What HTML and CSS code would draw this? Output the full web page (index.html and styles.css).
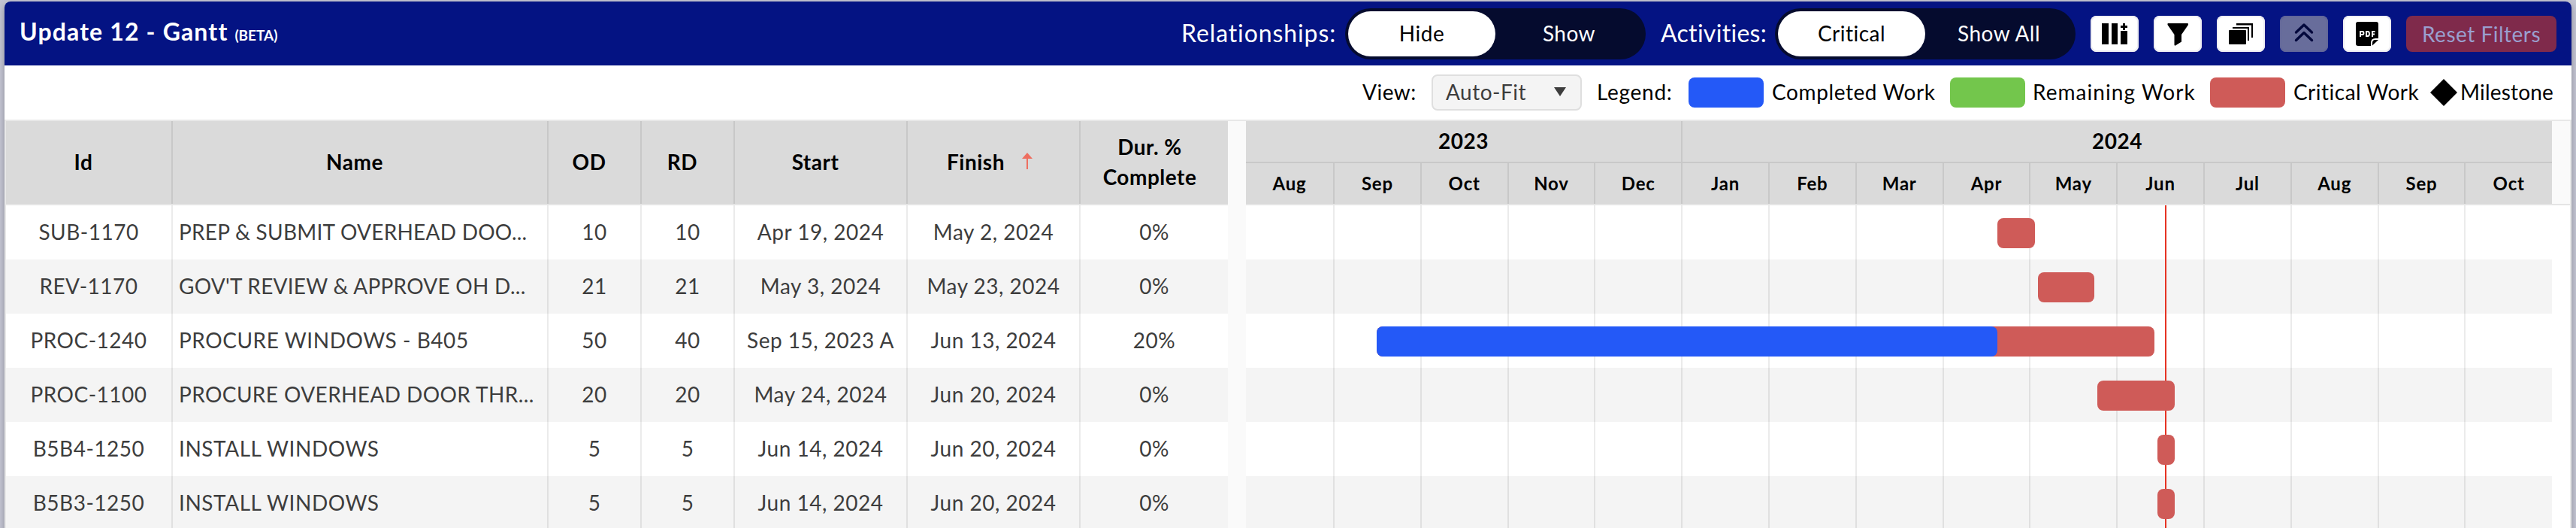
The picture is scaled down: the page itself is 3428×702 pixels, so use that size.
FILE: index.html
```html
<!DOCTYPE html>
<html lang="en">
<head>
<meta charset="utf-8">
<title>Update 12 - Gantt</title>
<link rel="stylesheet" href="styles.css">
</head>
<body>
<main class="card">
  <header class="topbar">
    <h1 class="title">Update 12 - Gantt <span class="beta">(BETA)</span></h1>
    <div class="controls">
      <span class="label label-rel">Relationships:</span>
      <div class="toggle"><span class="option active">Hide</span><span class="option">Show</span></div>
      <span class="label label-act">Activities:</span>
      <div class="toggle"><span class="option active">Critical</span><span class="option">Show All</span></div>
      <button class="icon-btn"><svg width="64" height="48" viewBox="0 0 64 48"><path d="M15 10h9v28h-9zM28 10h8v28h-8zM40 20h9v18h-9zM43 10h3v3h3v3h-3v3h-3v-3h-3v-3h3z"/></svg></button>
      <button class="icon-btn"><svg width="64" height="48" viewBox="0 0 64 48"><path d="M19 10h26q1 0 1 1v1l-9 13v9.500l-8 5q-1.500.5-1.500-1V25l-9-13v-1q0-1 .5-1z"/></svg></button>
      <button class="icon-btn"><svg width="64" height="48" viewBox="0 0 64 48"><rect x="16" y="19" width="23" height="19" rx="1"/><path d="M21 15h22v18h-2V17H21zM26 10h22v19h-2V12.500H26z"/></svg></button>
      <button class="icon-btn disabled"><svg width="64" height="48" viewBox="0 0 64 48"><path class="chev" d="M21.500 22 32 12l10.500 10M21.500 32.500 32 22.500l10.500 10"/></svg></button>
      <button class="icon-btn"><svg width="64" height="48" viewBox="0 0 64 48"><path d="M20 8h24q3 0 3 3v19h-4q-6 0-6 6v4H20q-3 0-3-3V11q0-3 3-3zM39 39.500V36q0-4 4-4h4z"/><path class="pdf" d="M23 28v-7h3q1.500 0 1.500 2t-1.500 2h-3M31 21v6h2q2 0 2-3t-2-3zM39 28v-7h3.500M39 24.500h3"/></svg></button>
      <button class="reset">Reset Filters</button>
    </div>
  </header>

  <section class="toolbar">
    <span class="text view">View:</span>
    <div class="select"><span>Auto-Fit</span><svg width="16" height="12" viewBox="0 0 16 12"><path d="M0 0h16L8 12z"/></svg></div>
    <span class="text legend">Legend:</span>
    <i class="swatch blue"></i><span class="text completed">Completed Work</span>
    <i class="swatch green"></i><span class="text remaining">Remaining Work</span>
    <i class="swatch red"></i><span class="text critical">Critical Work</span>
    <svg class="diamond" width="36" height="36" viewBox="0 0 36 36"><path d="M18 0 36 18 18 36 0 18z"/></svg><span class="text milestone">Milestone</span>
  </section>

  <section class="gantt">
    <div class="grid">
      <div class="cols head">
        <div>Id</div><div>Name</div><div>OD</div><div>RD</div><div>Start</div>
        <div class="sorted">Finish<svg width="14" height="22" viewBox="0 0 14 22"><path d="M7 0l7 8H8v14H6V8H0z"/></svg></div>
        <div class="dur">Dur. %<br>Complete</div>
      </div>
      <div class="cols row"><div>SUB-1170</div><div class="name tight">PREP &amp; SUBMIT OVERHEAD DOO...</div><div>10</div><div>10</div><div>Apr 19, 2024</div><div>May 2, 2024</div><div>0%</div></div>
      <div class="cols row"><div>REV-1170</div><div class="name tight">GOV'T REVIEW &amp; APPROVE OH D...</div><div>21</div><div>21</div><div>May 3, 2024</div><div>May 23, 2024</div><div>0%</div></div>
      <div class="cols row"><div>PROC-1240</div><div class="name wide">PROCURE WINDOWS - B405</div><div>50</div><div>40</div><div>Sep 15, 2023 A</div><div>Jun 13, 2024</div><div>20%</div></div>
      <div class="cols row"><div>PROC-1100</div><div class="name">PROCURE OVERHEAD DOOR THR...</div><div>20</div><div>20</div><div>May 24, 2024</div><div>Jun 20, 2024</div><div>0%</div></div>
      <div class="cols row"><div>B5B4-1250</div><div class="name wide">INSTALL WINDOWS</div><div>5</div><div>5</div><div>Jun 14, 2024</div><div>Jun 20, 2024</div><div>0%</div></div>
      <div class="cols row"><div>B5B3-1250</div><div class="name wide">INSTALL WINDOWS</div><div>5</div><div>5</div><div>Jun 14, 2024</div><div>Jun 20, 2024</div><div>0%</div></div>
    </div>
    <div class="splitter"></div>
    <div class="timeline">
      <div class="scale">
        <div class="years"><div>2023</div><div>2024</div></div>
        <div class="months">
          <div>Aug</div><div>Sep</div><div>Oct</div><div>Nov</div><div>Dec</div><div>Jan</div><div>Feb</div><div>Mar</div><div>Apr</div><div>May</div><div>Jun</div><div>Jul</div><div>Aug</div><div>Sep</div><div>Oct</div>
        </div>
      </div>
      <div class="lanes">
        <div class="today"></div>
        <div class="row lane"><i class="bar" style="left:1000px;width:50px"></i></div>
        <div class="row lane"><i class="bar" style="left:1054px;width:75px"></i></div>
        <div class="row lane"><i class="bar" style="left:174px;width:1035px"><i class="done" style="width:826px"></i></i></div>
        <div class="row lane"><i class="bar" style="left:1133px;width:103px"></i></div>
        <div class="row lane"><i class="bar" style="left:1213px;width:23px"></i></div>
        <div class="row lane"><i class="bar" style="left:1213px;width:23px"></i></div>
        <div class="gridlines"><i></i><i></i><i></i><i></i><i></i><i></i><i></i><i></i><i></i><i></i><i></i><i></i><i></i><i></i><i></i></div>
      </div>
    </div>
    <div class="gutter"></div>
  </section>
</main>
</body>
</html>
```
FILE: styles.css
```css
* { box-sizing: border-box; }
body {
  margin: 0;
  padding: 2px 6px 0;
  height: 702px;
  overflow: hidden;
  background: #c4c5d3;
  font: 28px/40px Lato, "Noto Sans", sans-serif;
  letter-spacing: .5px;
  color: #000;
  white-space: nowrap;
}
.card {
  height: 720px;
  border-radius: 8px;
  overflow: hidden;
  background: #fff;
  box-shadow: 0 4px 10px rgba(0, 0, 0, .3);
}
button { font: inherit; letter-spacing: inherit; border: 0; padding: 0; }

/* Top bar */
.topbar {
  display: flex;
  justify-content: space-between;
  align-items: center;
  height: 85px;
  padding: 0 20px;
  background: #041383;
  color: #fff;
}
.title { margin: 0; padding-bottom: 1px; font-size: 32px; letter-spacing: 1.15px; }
.beta { font-size: 19px; letter-spacing: 0; }
.controls { display: flex; align-items: center; }
.label { padding-bottom: 1px; font-size: 32px; }
.label-rel { width: 218px; letter-spacing: .9px; }
.label-act { width: 152px; margin-left: 20px; letter-spacing: .3px; }
.toggle {
  display: flex;
  width: 400px;
  height: 68px;
  padding: 4px;
  border-radius: 34px;
  background: #050b2e;
}
.option { flex: 1; text-align: center; line-height: 58px; border-radius: 30px; }
.option.active { background: #fff; color: #000; }
.icon-btn {
  display: flex;
  width: 64px;
  height: 48px;
  margin-left: 20px;
  border-radius: 8px;
  background: #fff;
  box-shadow: inset 0 0 0 2px #ededf2;
}
.icon-btn.disabled { background: #686d9b; box-shadow: inset 0 0 0 2px #62679a; }
.chev { fill: none; stroke: #03083c; stroke-width: 3.4; stroke-linecap: round; stroke-linejoin: round; }
.pdf { fill: none; stroke: #fff; stroke-width: 1.8; }
.reset {
  width: 200px;
  height: 48px;
  margin-left: 20px;
  border-radius: 8px;
  background: #7f2a4b;
  color: #9a9fce;
  line-height: 46px;
}

/* View select and legend */
.toolbar { display: flex; align-items: center; justify-content: flex-end; height: 72px; padding-right: 22px; }
.text { padding-bottom: 2px; }
.view { width: 92px; }
.select {
  display: flex;
  align-items: center;
  justify-content: space-between;
  width: 200px;
  height: 48px;
  margin-right: 20px;
  padding: 0 19px 2px 17px;
  border: 2px solid #dfdfdf;
  border-radius: 8px;
  background: #f4f4f4;
  color: #3d3d3d;
}
.select svg { fill: #3d3d3d; }
.legend { width: 122px; letter-spacing: .7px; }
.swatch { width: 100px; height: 40px; margin-right: 11px; border-radius: 8px; }
.blue { background: #2459f7; }
.green { background: #73c64c; }
.red { background: #cf5b58; }
.completed { width: 237px; letter-spacing: .6px; }
.remaining { width: 236px; margin-left: -1px; letter-spacing: 1.05px; }
.critical { width: 182px; }
.diamond { margin-right: 4px; }
.milestone { width: 126px; letter-spacing: .2px; }

/* Gantt */
.gantt { display: flex; height: 561px; border: 2px solid #e8e8e8; }
.grid { width: 1626px; }
.cols { display: grid; grid-template-columns: 222px 500px 124px 124px 230px 230px 196px; }
.cols > div {
  display: flex;
  align-items: center;
  justify-content: center;
  padding-bottom: 2px;
  border-right: 2px solid rgba(0, 0, 0, .08);
}
.cols > div:last-child { border-right: 0; }
.head { height: 112px; background: #dadada; border-bottom: 2px solid #e5e5e5; font-weight: 700; }
.head > div { padding-right: 14px; }
.head .sorted { padding: 0 10px 2px 0; }
.sorted svg { margin: -2px 0 0 23px; fill: #ee6e60; }
.head .dur { text-align: center; padding-right: 12px; }
.row { height: 72px; color: #3d3d3d; }
.row:nth-child(odd) { background: #f4f4f4; }
.cols .name { justify-content: flex-start; padding-left: 8px; letter-spacing: .4px; }
.cols .tight { letter-spacing: .25px; }
.cols .wide { letter-spacing: .55px; }
.splitter { width: 24px; background: #fafafa; }
.timeline { width: 1738px; }
.scale { height: 112px; background: #dadada; border-bottom: 2px solid #e5e5e5; font-weight: 700; text-align: center; }
.years { display: grid; grid-template-columns: 581px 1fr; height: 56px; line-height: 52px; border-bottom: 2px solid #c8c8c8; }
.years > div:first-child { border-right: 2px solid #c8c8c8; }
.months, .gridlines { display: grid; grid-template-columns: 118px repeat(13, 115.8px) 1fr; }
.months { font-size: 24px; line-height: 54px; letter-spacing: .8px; }
.months > div { border-right: 2px solid #c8c8c8; }
.months > div:last-child { border-right: 0; }
.lanes { position: relative; }
.lane { position: relative; }
.gridlines { position: absolute; inset: 0; }
.gridlines i { border-right: 2px solid rgba(0, 0, 0, .08); }
.gridlines i:last-child { border-right: 0; }
.bar {
  position: absolute;
  z-index: 2;
  top: 17px;
  height: 40px;
  border-radius: 8px;
  background: #cf5b58;
}
.done { display: block; height: 40px; border-radius: 8px; background: #2459f7; }
.today { position: absolute; z-index: 1; left: 1223px; top: 0; bottom: 0; width: 2px; background: #e63323; }
.gutter { flex: 1; height: 112px; background: #fafafa; border-bottom: 2px solid #e5e5e5; }
```
